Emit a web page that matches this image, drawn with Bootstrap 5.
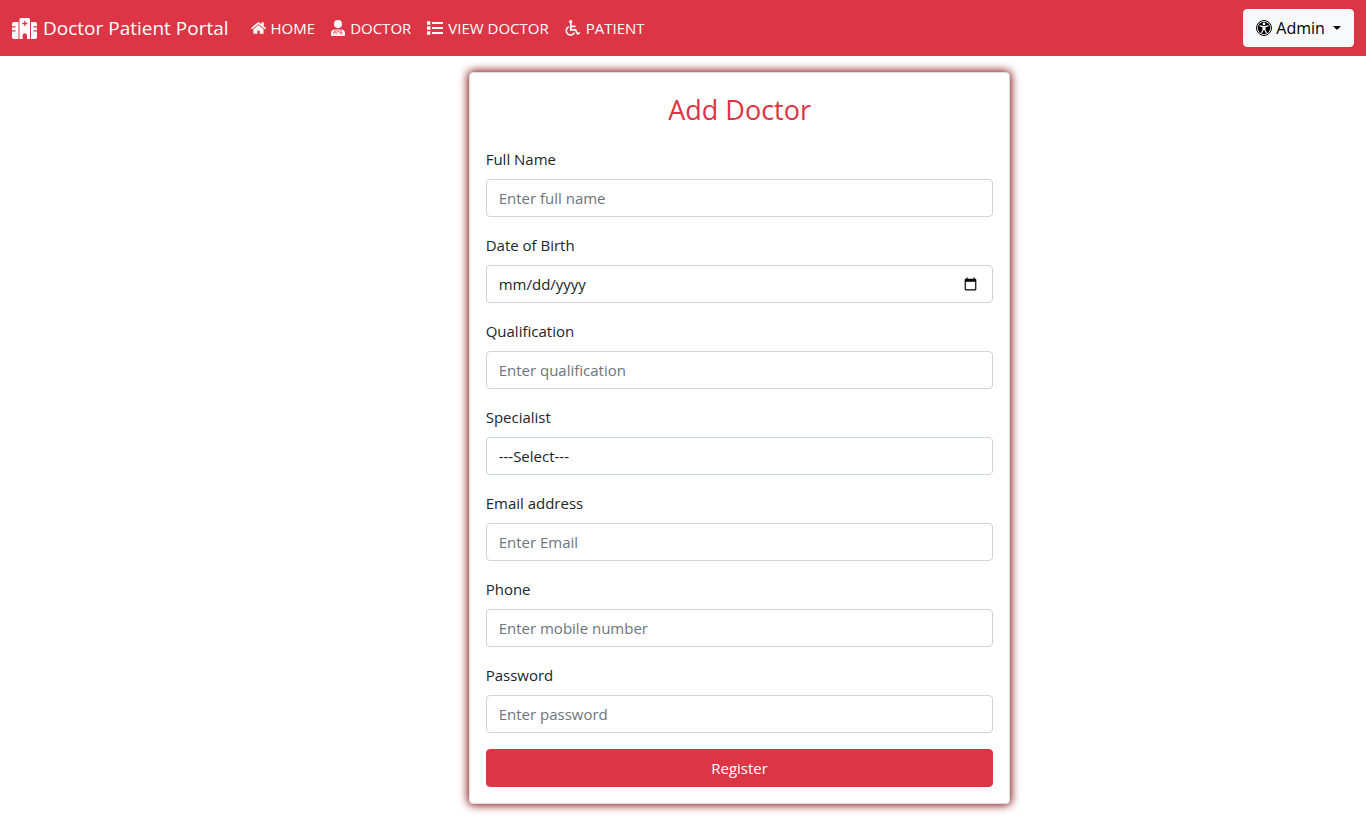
<!DOCTYPE html>
<html lang="en">
<head>
<meta charset="utf-8">
<meta name="viewport" content="width=device-width, initial-scale=1">
<title>Add Doctor</title>
<link href="https://cdn.jsdelivr.net/npm/bootstrap@5.3.0/dist/css/bootstrap.min.css" rel="stylesheet">
<style>
  body { font-family: "Open Sans", "Noto Sans", sans-serif; font-size: 15px; line-height: 24px; color: #212529; }
  .portal-bar { --bs-navbar-brand-font-size: 19px; }
  .portal-bar .navbar-brand { line-height: 30px; margin-right: 14px; }
  .portal-bar .nav-link { --bs-nav-link-font-size: 15px; color: #fff; }
  .portal-bar .icon { margin-right: 5px; flex: none; fill: #fff; }
  .btn { --bs-btn-font-size: 15px; --bs-btn-line-height: 24px; --bs-btn-border-radius: 4px; }
  .portal-bar .dropdown-toggle { --bs-btn-font-size: 16px; }
  .paint-card { --bs-card-border-radius: 4px; --bs-card-border-color: #dfdfdf; box-shadow: 0 0 10px 1px maroon; }
  .form-title { font-size: 27px; line-height: 42px; color: #dc3545; }
  .form-label { color: #212529; }
  .form-control { font-size: 15px; line-height: 24px; height: 38px; border-color: #ced4da; border-radius: 4px; color: #212529; }
  .form-control::placeholder { color: #6c757d; }
</style>
</head>
<body>
<nav class="navbar navbar-expand-lg navbar-dark bg-danger portal-bar" aria-label="Main">
  <div class="container-fluid">
    <a class="navbar-brand d-flex align-items-center" href="#">
      <svg class="icon" width="26" height="21" viewBox="0 0 26 21" aria-hidden="true"><path fill-rule="evenodd" d="M9 0h7.500a1.500 1.500 0 0 1 1.500 1.500V21h-3v-3.500a2.200 2.200 0 0 0-4.400 0V21H7.500V1.500A1.500 1.500 0 0 1 9 0zM12.200 3v1.800h-1.900v1.400h1.900V8h1.300V6.200h1.900V4.800h-1.900V3z"/><path d="M6.500 4v17H2a2 2 0 0 1-2-2v-5.500h3.500v-1.300H0V9.500h3.500V8.200H0V6a2 2 0 0 1 2-2zM19 4h4a2 2 0 0 1 2 2v2.200h-3.500v1.300H25v2.700h-3.500v1.300H25V19a2 2 0 0 1-2 2h-4z"/></svg>
      Doctor Patient Portal
    </a>
    <button class="navbar-toggler" type="button" data-bs-toggle="collapse" data-bs-target="#mainMenu" aria-controls="mainMenu" aria-expanded="false" aria-label="Toggle navigation"><span class="navbar-toggler-icon"></span></button>
    <div class="collapse navbar-collapse" id="mainMenu">
      <ul class="navbar-nav me-auto">
        <li class="nav-item"><a class="nav-link d-flex align-items-center" href="#">
          <svg class="icon" width="15" height="14" viewBox="0 0 576 512" aria-hidden="true"><path d="M280.370 148.260L96 300.110V464a16 16 0 0 0 16 16l112.060-.29a16 16 0 0 0 15.920-16V368a16 16 0 0 1 16-16h64a16 16 0 0 1 16 16v95.640a16 16 0 0 0 16 16.050L464 480a16 16 0 0 0 16-16V300L295.670 148.260a12.190 12.190 0 0 0-15.300 0zM571.600 251.470L488 182.560V44.050a12 12 0 0 0-12-12h-56a12 12 0 0 0-12 12v72.610L318.470 43a48 48 0 0 0-61 0L4.340 251.470a12 12 0 0 0-1.600 16.900l25.500 31A12 12 0 0 0 45.150 301l235.220-193.740a12.190 12.190 0 0 1 15.300 0L530.900 301a12 12 0 0 0 16.900-1.600l25.500-31a12 12 0 0 0-1.700-16.930z"/></svg>HOME</a></li>
        <li class="nav-item"><a class="nav-link d-flex align-items-center" href="#">
          <svg class="icon" width="14" height="16" viewBox="0 0 14 16" aria-hidden="true"><circle cx="7" cy="4" r="4"/><path d="M4 9.500h6a4 4 0 0 1 4 4V15a1 1 0 0 1-1 1H1a1 1 0 0 1-1-1v-1.500a4 4 0 0 1 4-4z"/><path d="M4 9.500v2.500M2.700 14.300v-1.100a1.300 1.300 0 0 1 2.600 0v1.100M10 9.500v2.700M5.200 9.600L7 12.500l1.800-2.900" fill="none" stroke="#dc3545" stroke-width=".8"/><circle cx="10" cy="13" r=".9" fill="none" stroke="#dc3545" stroke-width=".8"/></svg>DOCTOR</a></li>
        <li class="nav-item"><a class="nav-link d-flex align-items-center" href="#">
          <svg class="icon" width="16" height="16" viewBox="0 0 16 16" aria-hidden="true"><path d="M0 1.300h3.400v3.400H0zM0 6.300h3.400v3.400H0zM0 11.300h3.400v3.400H0zM5 2h11v2H5zM5 7h11v2H5zM5 12h11v2H5z"/></svg>VIEW DOCTOR</a></li>
        <li class="nav-item"><a class="nav-link d-flex align-items-center" href="#">
          <svg class="icon" width="16" height="16" viewBox="0 0 16 16" aria-hidden="true"><circle cx="5.700" cy="1.700" r="1.700"/><path d="M5.800 3v6.900h4.800l2 4 2.400-1.100M6 6.400h4.500M3.800 6.800a4.300 4.300 0 1 0 5.700 5.700" fill="none" stroke="#fff" stroke-width="1.600"/></svg>PATIENT</a></li>
      </ul>
      <div class="dropdown">
        <button class="btn btn-light dropdown-toggle d-flex align-items-center" type="button" data-bs-toggle="dropdown" aria-expanded="false">
          <svg width="16" height="16" class="me-1" viewBox="0 0 16 16" aria-hidden="true"><circle cx="8" cy="8" r="7.500" fill="#fff" stroke="#000"/><circle cx="8" cy="8" r="6.200"/><circle cx="8" cy="3.900" r="1.300" fill="#fff"/><path d="M3.900 5.900L7 6.700h2l3.100-.8M8 6.500v3.200M7.100 6.800v2.700l-1.300 3.300M8.900 6.800v2.700l1.300 3.300" fill="none" stroke="#fff" stroke-width="1.200" stroke-linecap="round"/></svg>
          <span class="me-1">Admin</span>
        </button>
        <ul class="dropdown-menu dropdown-menu-end"><li><a class="dropdown-item" href="#">Logout</a></li></ul>
      </div>
    </div>
  </div>
</nav>

<main class="container-fluid p-3">
  <div class="row">
    <div class="col-md-5 offset-md-4">
      <div class="card paint-card">
        <div class="card-body">
          <h1 class="form-title text-center fw-normal mb-3">Add Doctor</h1>
          <form>
            <div class="mb-3"><label class="form-label" for="fullName">Full Name</label><input id="fullName" type="text" class="form-control" placeholder="Enter full name"></div>
            <div class="mb-3"><label class="form-label" for="dob">Date of Birth</label><input id="dob" type="date" class="form-control"></div>
            <div class="mb-3"><label class="form-label" for="qualification">Qualification</label><input id="qualification" type="text" class="form-control" placeholder="Enter qualification"></div>
            <div class="mb-3"><label class="form-label" for="specialist">Specialist</label><select id="specialist" class="form-control"><option>---Select---</option></select></div>
            <div class="mb-3"><label class="form-label" for="email">Email address</label><input id="email" type="email" class="form-control" placeholder="Enter Email"></div>
            <div class="mb-3"><label class="form-label" for="phone">Phone</label><input id="phone" type="text" class="form-control" placeholder="Enter mobile number"></div>
            <div class="mb-3"><label class="form-label" for="password">Password</label><input id="password" type="password" class="form-control" placeholder="Enter password"></div>
            <button type="submit" class="btn btn-danger w-100">Register</button>
          </form>
        </div>
      </div>
    </div>
  </div>
</main>
<script src="https://cdn.jsdelivr.net/npm/bootstrap@5.3.0/dist/js/bootstrap.bundle.min.js"></script>
</body>
</html>
